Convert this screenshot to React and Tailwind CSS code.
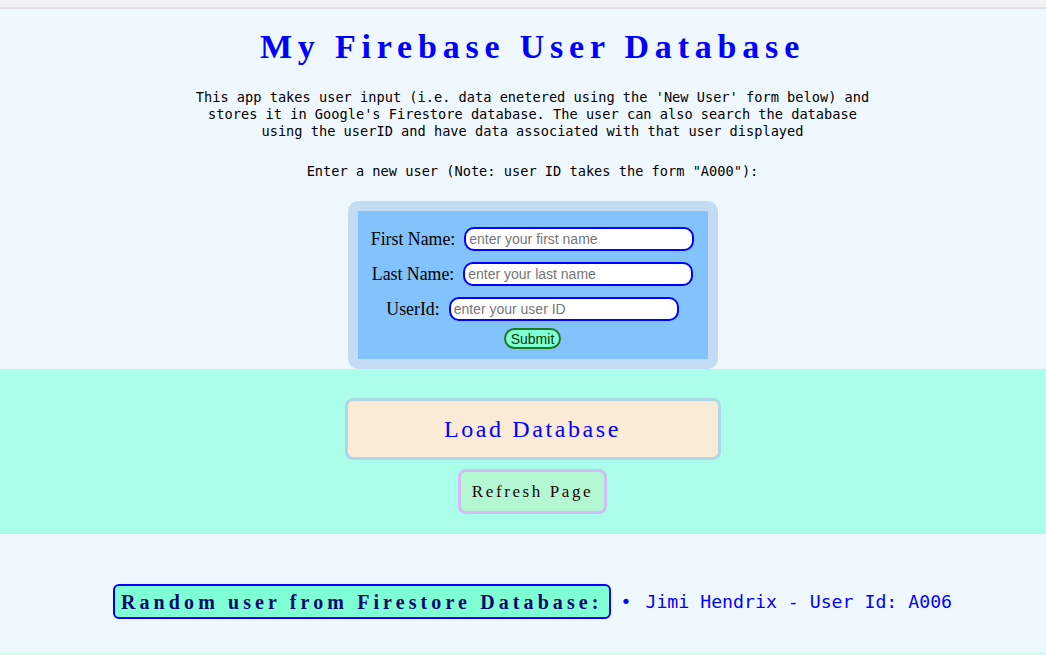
import React from "react";

const SERIF = "font-['Liberation_Serif','DejaVu_Serif',serif]";
const MONO = "font-['DejaVu_Sans_Mono','Liberation_Mono',monospace]";
const SANS = "font-['Liberation_Sans',Arial,sans-serif]";

export default function App() {
  return (
    <div className="min-h-screen bg-[#f0f8ff]">
      <div className="h-[9px] bg-[#f1f3f4] border-b-2 border-[#dfe1e5]" />
      <section className="flex flex-col items-center pl-[19px]">
        <h1
          className={`mt-[18px] text-[34px] leading-[40px] font-bold tracking-[5.8px] text-[#0000ff] ${SERIF}`}
        >
          My Firebase User Database
        </h1>
        <p
          className={`mt-[22px] w-[690px] text-center text-[13.65px] leading-[17px] text-black ${MONO}`}
        >
          This app takes user input (i.e. data enetered using the 'New User' form below) and
          stores it in Google's Firestore database. The user can also search the database
          using the userID and have data associated with that user displayed
        </p>
        <p className={`mt-[23px] text-[13.65px] leading-[17px] text-black ${MONO}`}>
          Enter a new user (Note: user ID takes the form "A000"):
        </p>
        <div className="mt-[21px] w-[370px] rounded-[10px] bg-[#c4dcf3] p-[10px]">
          <div className="flex flex-col items-center bg-[#82c2fd] pt-[16px] pb-[10px]">
            {[
              ["First Name:", "enter your first name"],
              ["Last Name:", "enter your last name"],
              ["UserId:", "enter your user ID"],
            ].map(([label, ph]) => (
              <div key={label} className="mb-[11px] flex items-center gap-[9px]">
                <span className={`text-[17.8px] leading-[24px] text-black ${SERIF}`}>
                  {label}
                </span>
                <input
                  placeholder={ph}
                  className={`h-[24px] w-[230px] rounded-[10px] border-2 border-[#0000ff] bg-white px-[3px] text-[14px] text-black outline-none placeholder:text-[#767676] ${SANS}`}
                />
              </div>
            ))}
            <button
              className={`-mt-[4px] h-[21px] w-[57px] rounded-full border-2 border-[#1d7a1d] bg-[#7fffd4] text-[14px] leading-[16px] text-[#0a3a0a] ${SANS}`}
            >
              Submit
            </button>
          </div>
        </div>
      </section>
      <section className="flex flex-col items-center bg-[#abfeea] pt-[29px] pb-[20px] pl-[19px]">
        <button
          className={`h-[62px] w-[376px] rounded-[8px] border-[3px] border-[#add8e6] bg-[#faebd7] text-[24px] tracking-[2.6px] text-[#0000ff] ${SERIF}`}
        >
          Load Database
        </button>
        <button
          className={`mt-[9px] h-[45px] w-[149px] rounded-[8px] border-[3px] border-[#d4bdf6] bg-[#b3f7d3] text-[17px] tracking-[2.6px] text-[#1a0505] ${SERIF}`}
        >
          Refresh Page
        </button>
      </section>
      <section className="flex h-[118px] items-start justify-center pt-[50px] pl-[19px]">
        <div className="flex items-center">
          <div
            className={`flex h-[35px] items-center justify-center rounded-[6px] border-2 border-[#0000ff] bg-[#7fffd4] px-[6px] text-[20px] font-bold tracking-[4.1px] text-[#0a0a6e] ${SERIF}`}
          >
            Random user from Firestore Database:
          </div>
          <span className={`ml-[10px] text-[18px] text-[#0000ff] ${MONO}`}>•</span>
          <span className={`ml-[14px] text-[18.2px] text-[#0000ff] ${MONO}`}>
            Jimi Hendrix - User Id: A006
          </span>
        </div>
      </section>
      <div className="h-[3px] bg-[#d6fbf1]" />
    </div>
  );
}
